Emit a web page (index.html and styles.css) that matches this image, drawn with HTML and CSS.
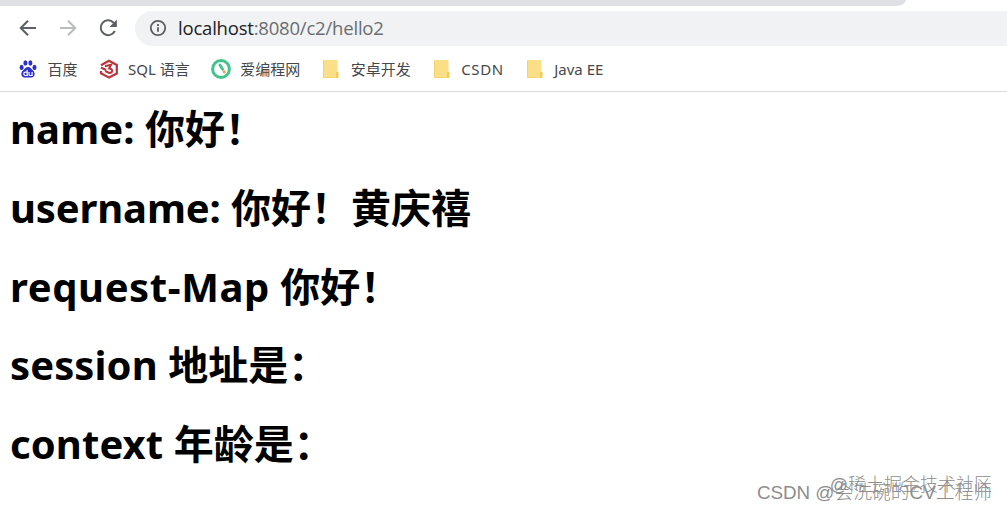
FILE: index.html
```html
<!DOCTYPE html>
<html lang="zh-CN">
  <head>
    <meta charset="UTF-8" />
    <title>hello2</title>
    <link rel="stylesheet" href="styles.css">
  </head>
  <body>
    <div class="tab-strip"></div>

    <!-- 地址栏 -->
    <div class="toolbar">
      <svg class="nav-icon" viewBox="0 0 20 20"><path d="M18 10H3M10 2.7L2.7 10l7.3 7.3" /></svg>
      <svg class="nav-icon disabled" viewBox="0 0 20 20"><path d="M2 10h15M10 2.7l7.3 7.3-7.3 7.3" /></svg>
      <svg class="nav-icon" viewBox="0 0 20 20"><path d="M16.8 13a7.400 7.400 0 1 1-1.200-8.300l1.300 1.500" /><path class="solid" d="M18.900 1.500v7.400h-7.400z" /></svg>
      <div class="address">
        <svg class="info" viewBox="0 0 18 18"><circle cx="9" cy="9" r="7.2" /><path d="M9 8.200v4.600M9 5v2" /></svg>
        <span class="url"><b>localhost</b>:8080/c2/hello2</span>
      </div>
    </div>

    <!-- 书签栏 -->
    <div class="bookmarks">
      <a class="bookmark">
        <svg viewBox="0 0 20 20" fill="#2a2fd0">
          <ellipse cx="3.600" cy="8.400" rx="2" ry="2.600" /><ellipse cx="7.400" cy="4" rx="2" ry="2.700" />
          <ellipse cx="12.400" cy="4" rx="2" ry="2.700" /><ellipse cx="16.500" cy="8.400" rx="2" ry="2.600" />
          <path d="M10 8c2.600 0 3 2 5 3.600 2.500 2 2.200 6.900-1.500 6.900H6.500c-3.700 0-4-4.900-1.500-6.900C7 10 7.400 8 10 8z" />
          <path d="M9.200 10.800v5.700H7.400a1.600 1.600 0 0 1 0-3.300h1.800M11 13v2.200q0 1.300 1.200 1.300h1.900V13" fill="none" stroke="#fff" stroke-width="1.200" />
        </svg>
        <span>百度</span>
      </a>
      <a class="bookmark">
        <svg viewBox="0 0 20 20" fill="none" stroke="#bf3439" stroke-width="2.200">
          <path d="M2 6.300l8-4.600 7.800 4.300v8.600L10 18.600l-8-4.300V12" />
          <path d="M2 8.500l5 2.500M6 7.200l6-1.400-1.800 3.700c4 0 3.800 4.500 0 4.500l-4-2" stroke-width="2" />
        </svg>
        <span>SQL 语言</span>
      </a>
      <a class="bookmark">
        <svg viewBox="0 0 20 20">
          <circle cx="10" cy="10" r="8.400" fill="#fff" stroke="#43c38c" stroke-width="3" />
          <path d="M9 6l2.600 4.200" stroke="#43c38c" stroke-width="2.800" stroke-linecap="round" />
          <circle cx="13.200" cy="12.800" r="1.600" fill="#f0a050" />
        </svg>
        <span>爱编程网</span>
      </a>
      <a class="bookmark">
        <svg viewBox="0 0 20 20"><use href="#folder" /></svg>
        <span>安卓开发</span>
      </a>
      <a class="bookmark">
        <svg viewBox="0 0 20 20"><use href="#folder" /></svg>
        <span class="wide">CSDN</span>
      </a>
      <a class="bookmark">
        <svg viewBox="0 0 20 20">
          <g id="folder">
            <rect x="2" y="1" width="14.500" height="18" rx="1" fill="#fbdf86" />
            <path d="M2.500 2v16.500h10" fill="none" stroke="#f4d36c" />
            <path d="M15 13h2.500v5q0 1-1 1H14q1-.5 1-2z" fill="#f1cc58" />
          </g>
        </svg>
        <span>Java EE</span>
      </a>
    </div>

    <main class="content">
      <h1><span class="field">name:</span> 你好！</h1>
      <h1><span class="field username">username:</span> 你好！黄庆禧</h1>
      <h1><span class="field request">request-Map</span> 你好！</h1>
      <h1><span class="field">session</span> 地址是：</h1>
      <h1><span class="field">context</span> 年龄是：</h1>
    </main>

    <div class="watermark juejin">@稀土掘金技术社区</div>
    <div class="watermark csdn">CSDN @会洗碗的CV工程师</div>
  </body>
</html>
```

FILE: styles.css
```css
body {
  margin: 0;
  height: 511px;
  overflow: hidden;
  background: #fff;
  font-family: "Noto Sans", "Noto Sans CJK SC", sans-serif;
}

.tab-strip {
  width: 906px;
  height: 6px;
  background: #dee0e4;
  border-bottom-right-radius: 10px 6px;
}

/* 地址栏 */
.toolbar {
  display: flex;
  align-items: center;
  height: 35px;
  margin-top: 5px;
  padding-left: 18px;
}

.nav-icon {
  flex: none;
  width: 20px;
  height: 20px;
  margin: 0 20px 2px 0;
  fill: none;
  stroke: #5c5f63;
  stroke-width: 2;
}

.nav-icon.disabled {
  stroke: #bbbcbe;
}

.nav-icon .solid {
  fill: #5c5f63;
  stroke: none;
}

.address {
  flex: 1;
  display: flex;
  align-items: center;
  box-sizing: border-box;
  height: 35px;
  margin-left: -3px;
  padding: 0 0 1px 14px;
  border-radius: 18px 0 0 18px;
  background: #f1f2f4;
}

.info {
  width: 18px;
  height: 18px;
  margin-right: 11px;
  fill: none;
  stroke: #5c5f63;
  stroke-width: 1.8;
}

.url {
  font-family: "Open Sans", sans-serif;
  font-size: 18.5px;
  line-height: 24px;
  letter-spacing: -0.2px;
  color: #6a6d71;
}

.url b {
  font-weight: 400;
  color: #202124;
}

/* 书签栏 */
.bookmarks {
  display: flex;
  align-items: center;
  gap: 21px;
  height: 45px;
  padding-left: 18px;
  border-bottom: 1px solid #d9dadc;
}

.bookmark {
  display: flex;
  align-items: center;
  gap: 9.5px;
  font-size: 15px;
  line-height: 20px;
  color: #45474a;
  white-space: nowrap;
}

.bookmark svg {
  width: 20px;
  height: 20px;
}

.bookmark .wide {
  letter-spacing: 0.6px;
}

/* 页面内容 */
.content {
  padding: 10px 10px 0;
}

.content h1 {
  margin: 0 0 25.8px;
  font-size: 40px;
  line-height: 53px;
  font-weight: 700;
  color: #000;
  white-space: nowrap;
}

.field {
  letter-spacing: 0.1px;
}

.username {
  letter-spacing: -0.15px;
}

.request {
  letter-spacing: 0.6px;
}

/* 水印 */
.watermark {
  position: absolute;
  right: 15px;
  white-space: nowrap;
  font-family: "Liberation Sans", "Noto Sans CJK SC", sans-serif;
  font-weight: 300;
  line-height: 24px;
  color: #8d8d8d;
}

.juejin {
  top: 473px;
  font-size: 18px;
}

.csdn {
  top: 481px;
  font-size: 18.8px;
}
```
